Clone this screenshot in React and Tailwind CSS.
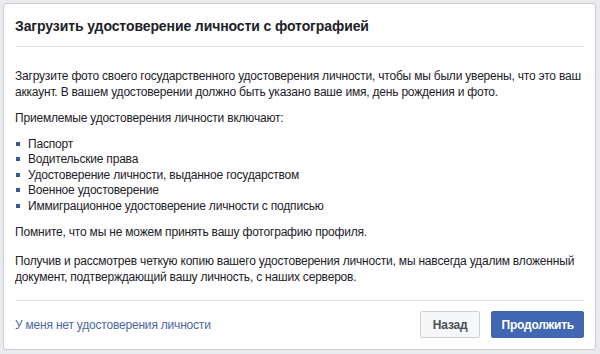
import React from 'react';

const idTypes = [
  'Паспорт',
  'Водительские права',
  'Удостоверение личности, выданное государством',
  'Военное удостоверение',
  'Иммиграционное удостоверение личности с подписью',
];

function App() {
  return (
    <div
      className="w-[600px] h-[354px] bg-[#e9ebee] p-[3px] pr-[4px] pb-[4px]"
      style={{ fontFamily: '"Liberation Sans", Arial, sans-serif' }}
    >
      <div className="h-full bg-white border border-[#c9ccd1] rounded-[3px] px-[11px] flex flex-col text-[#1d2129] tracking-[-0.2px]">
        {/* header */}
        <div className="h-[43px] flex items-center border-b border-[#e5e5e5] pt-[1px]">
          <h1 className="text-[14px] font-bold leading-[18px] tracking-[-0.1px]">
            Загрузить удостоверение личности с фотографией
          </h1>
        </div>

        {/* body */}
        <div className="flex-1 pt-[21px] text-[12px] leading-[16px]">
          <p className="mb-[10px]">
            Загрузите фото своего государственного удостоверения личности, чтобы мы были уверены, что это ваш
            аккаунт. В вашем удостоверении должно быть указано ваше имя, день рождения и фото.
          </p>
          <p className="mb-[10px]">Приемлемые удостоверения личности включают:</p>
          <ul className="mb-[10px]">
            {idTypes.map((item) => (
              <li key={item} className="flex items-center h-[15.5px]">
                <span className="w-[4px] h-[4px] bg-[#365899] ml-[1px] mr-[8px]" />
                <span>{item}</span>
              </li>
            ))}
          </ul>
          <p className="mb-[13px]">Помните, что мы не можем принять вашу фотографию профиля.</p>
          <p>
            Получив и рассмотрев четкую копию вашего удостоверения личности, мы навсегда удалим вложенный
            документ, подтверждающий вашу личность, с наших серверов.
          </p>
        </div>

        {/* footer */}
        <div className="h-[49px] border-t border-[#e5e5e5] flex items-center justify-between pb-[1px]">
          <a href="#" className="text-[12px] text-[#4b67a1]">
            У меня нет удостоверения личности
          </a>
          <div className="flex gap-[11px]">
            <button className="h-[27px] px-[12px] text-[12px] font-bold text-[#4b4f56] bg-[#f6f7f9] border border-[#ced0d4] rounded-[2px]">
              Назад
            </button>
            <button className="h-[27px] px-[9px] text-[12px] font-bold text-white bg-[#4267b2] border border-[#4267b2] rounded-[2px]">
              Продолжить
            </button>
          </div>
        </div>
      </div>
    </div>
  );
}

export default App;
